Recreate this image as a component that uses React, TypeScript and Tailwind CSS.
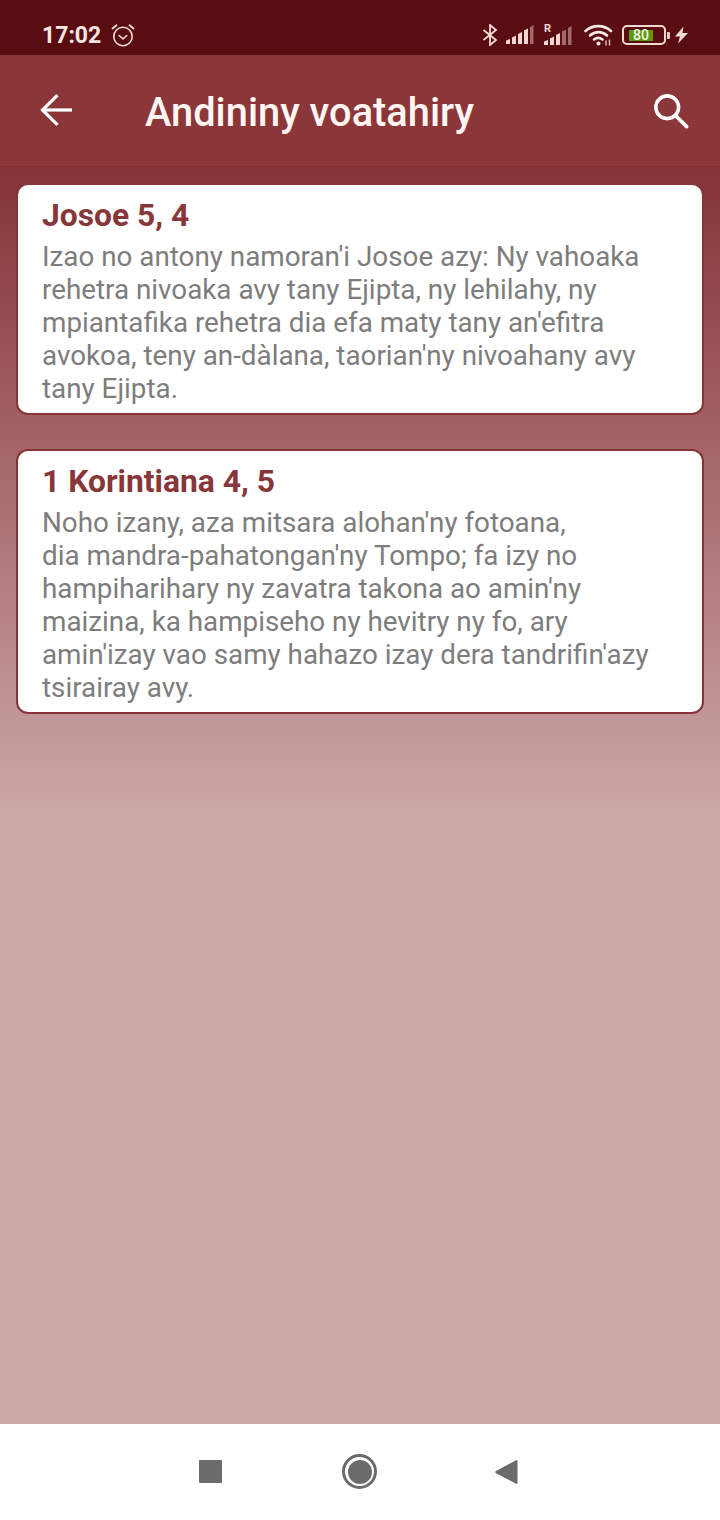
import React from "react";

function Signal({ lit }: { lit: number }) {
  const bars = [
    "M0 19V15.5L4 14V19Z",
    "M6 19V12.5L10 10.5V19Z",
    "M12 19V9L16 7V19Z",
    "M18 19V5.5L22 3.5V19Z",
    "M24 19V2L27.5 0V19Z",
  ];
  return (
    <svg width="28" height="19" viewBox="0 0 28 19">
      {bars.map((d, i) => (
        <path key={i} d={d} fill={i < lit ? "#f3d6d4" : "#a0696b"} />
      ))}
    </svg>
  );
}

function StatusIcons() {
  return (
    <div className="flex items-center">
      <svg width="16" height="22" viewBox="0 0 16 22" fill="none" stroke="#f0d8d8" strokeWidth="1.8" className="mr-[8px]">
        <path d="M1.5 6l12.5 10-6 5V1l6 5L1.5 16" />
      </svg>
      <div className="mr-[10px] mt-[-1px]">
        <Signal lit={4} />
      </div>
      <div className="relative mr-[12px] h-[20px] w-[28px]">
        <span className="absolute left-0 top-[-1px] text-[11px] font-bold leading-[10px] text-[#f0d8d8]">R</span>
        <div className="absolute bottom-0 left-0">
          <Signal lit={3} />
        </div>
      </div>
      <svg width="29" height="22" viewBox="0 0 29 22" fill="none" stroke="#f7e6e6" strokeWidth="2.6" strokeLinecap="round" className="mr-[9px]">
        <path d="M1.5 7C8.5 0.5 20 0.5 27 7" />
        <path d="M6 11.5C11 7 18 7 23 11.5" />
        <path d="M10 15.5C12.5 13.5 16 13.5 18.5 15.5" />
        <circle cx="14.5" cy="19.5" r="2" fill="#f7e6e6" stroke="none" />
        <path d="M22 16.5v5M25.5 15.5v6" strokeWidth="1.5" strokeLinecap="butt" stroke="#d8b8b8" />
      </svg>
      <div className="relative flex h-[20px] w-[44px] items-center rounded-[5px] border-[2px] border-[#eed8d2] pl-[5px]">
        <div className="flex h-[11px] w-[24px] items-center justify-center bg-[#5c9a0c] text-[14px] font-medium leading-none text-[#f4f4e8]">
          80
        </div>
      </div>
      <div className="mr-[5px] ml-[1px] h-[7px] w-[3px] rounded-r-[1px] bg-[#e8cfca]" />
      <svg width="13" height="18" viewBox="0 0 13 17" fill="#f0dada">
        <path d="M8.5 0L0 10h5l-2 7 10-10.5H7.5z" />
      </svg>
    </div>
  );
}

function Card({ title, children }: { title: string; children: React.ReactNode }) {
  return (
    <div className="rounded-[12px] border-2 border-[#86333a] bg-white pb-[8px] pl-[24px] pr-[32px] pt-[9px]">
      <div className="mb-[4px] text-[31.8px] font-bold leading-[42px] text-[#87363a]">{title}</div>
      <div className="text-[27.8px] leading-[33px] text-[#7d7d7d]">{children}</div>
    </div>
  );
}

export default function App() {
  return (
    <div className="flex h-[1520px] w-[720px] flex-col overflow-hidden font-['Roboto',sans-serif]">
      <div className="flex h-[55px] shrink-0 items-center justify-between bg-[#590d11] pl-[42px] pr-[32px] pt-[15px]">
        <div className="flex items-center gap-[10px]">
          <span className="text-[23px] font-bold leading-none text-[#f8e6e4]">17:02</span>
          <svg width="24" height="24" viewBox="0 0 24 24" fill="none" stroke="#f3dcd6" strokeWidth="1.6" strokeLinecap="round" strokeLinejoin="round">
            <circle cx="12" cy="13.5" r="9.2" />
            <path d="M8.2 12.5L12 15.8l3.8-3.3" />
            <path d="M1.5 5.5L5.5 2.2M22.5 5.5L18.5 2.2" strokeWidth="1.8" />
          </svg>
        </div>
        <StatusIcons />
      </div>

      <div className="flex h-[112px] shrink-0 items-center justify-between border-b border-[#7c2e31] bg-[#8b3639] pl-[40px] pr-[31px]">
        <div className="flex items-center">
          <svg width="33" height="32" viewBox="0 0 33 32" fill="none" stroke="#fff" strokeWidth="3.2">
            <path d="M32 16H3" />
            <path d="M17.5 1.2L2.5 16l15 14.8" />
          </svg>
          <span className="ml-[72px] mt-[5px] text-[39.8px] font-medium leading-none text-[#fff6f4]">Andininy voatahiry</span>
        </div>
        <svg width="36" height="36" viewBox="0 0 38 38" fill="none" stroke="#fff" strokeWidth="3.8" strokeLinecap="round">
          <circle cx="15" cy="15" r="12" />
          <path d="M24.5 24.5l11 11" />
        </svg>
      </div>

      <div className="flex flex-1 flex-col gap-[34px] bg-[linear-gradient(180deg,#853336_0,#cba6a7_640px)] px-[16px] pt-[16px]">
        <Card title="Josoe 5, 4">
          Izao no antony namoran'i Josoe azy: Ny vahoaka rehetra nivoaka avy tany Ejipta, ny lehilahy, ny mpiantafika rehetra dia efa maty tany an'efitra avokoa, teny an-dàlana, taorian'ny nivoahany avy tany Ejipta.
        </Card>
        <Card title="1 Korintiana 4, 5">
          Noho izany, aza mitsara alohan'ny fotoana,
          <br />
          dia mandra-pahatongan'ny Tompo; fa izy no hampiharihary ny zavatra takona ao amin'ny maizina, ka hampiseho ny hevitry ny fo, ary amin'izay vao samy hahazo izay dera tandrifin'azy tsirairay avy.
        </Card>
      </div>

      <div className="flex h-[96px] shrink-0 items-center justify-center bg-white pb-[1px]">
        <div className="h-[23px] w-[23px] rounded-[1px] bg-[#6b6b6b]" />
        <div className="ml-[120px] flex h-[35px] w-[35px] items-center justify-center rounded-full border-[3px] border-[#6b6b6b]">
          <div className="h-[24px] w-[24px] rounded-full bg-[#6b6b6b]" />
        </div>
        <svg width="23" height="26" viewBox="0 0 24 26" className="ml-[118px] mr-[3px]">
          <path d="M22.5 0.5a1 1 0 0 1 1 1V24.5a1 1 0 0 1-1 1L1 14.2a1.4 1.4 0 0 1 0-2.2z" fill="#6b6b6b" />
        </svg>
      </div>
    </div>
  );
}
